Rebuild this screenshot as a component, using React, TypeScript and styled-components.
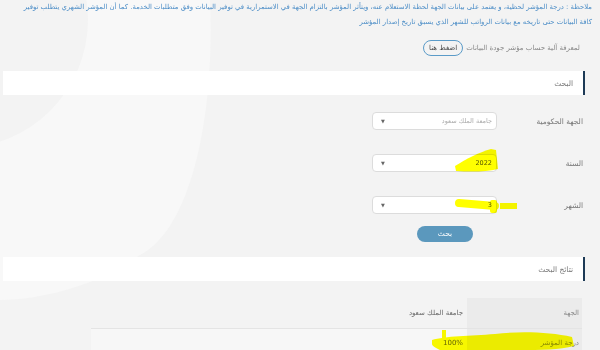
import React from 'react';
import styled, { createGlobalStyle } from 'styled-components';

const GlobalStyle = createGlobalStyle`
  html, body {
    margin: 0;
    padding: 0;
    background: #f3f3f3;
  }
  body {
    font-family: "DejaVu Sans", "Noto Sans", sans-serif;
  }
`;

interface ISelectField {
  label: string;
  value: string;
  isPlaceholder?: boolean;
}

const fields: ISelectField[] = [
  { label: 'الجهة الحكومية', value: 'جامعة الملك سعود', isPlaceholder: true },
  { label: 'السنة', value: '2022' },
  { label: 'الشهر', value: '3' },
];

const results = [
  { label: 'الجهة', value: 'جامعة الملك سعود' },
  { label: 'درجة المؤشر', value: '100%' },
];

const App: React.FC = () => (
  <StyledPage dir="rtl">
    <GlobalStyle />
    <StyledBackdrop viewBox="0 0 600 350" preserveAspectRatio="none" aria-hidden>
      <path d="M0,0 L210,0 C215,120 190,230 140,255 C100,285 40,300 0,300 Z" fill="#f8f8f8" />
      <circle cx="-40" cy="20" r="128" fill="#f3f3f3" />
    </StyledBackdrop>

    <StyledContent>
      <StyledNote>
        ملاحظة : درجة المؤشر لحظية، و يعتمد على بيانات الجهة لحظة الاستعلام عنه، ويتأثر المؤشر بالتزام الجهة في الاستمرارية في توفير البيانات وفق متطلبات الخدمة. كما أن المؤشر الشهري يتطلب توفير
        <br />
        كافة البيانات حتى تاريخه مع بيانات الرواتب للشهر الذي يسبق تاريخ إصدار المؤشر
      </StyledNote>

      <StyledHelpRow>
        <span>لمعرفة آلية حساب مؤشر جودة البيانات</span>
        <StyledOutlineButton type="button">اضغط هنا</StyledOutlineButton>
      </StyledHelpRow>

      <StyledSectionHeader>البحث</StyledSectionHeader>

      <StyledForm>
        {fields.map(field => (
          <StyledFormRow key={field.label}>
            <StyledLabel>{field.label}</StyledLabel>
            <StyledSelect isPlaceholder={!!field.isPlaceholder}>
              <span>{field.value}</span>
              <StyledCaret>▼</StyledCaret>
            </StyledSelect>
          </StyledFormRow>
        ))}
        <StyledSubmit type="button">بحث</StyledSubmit>
      </StyledForm>

      <StyledSectionHeader>نتائج البحث</StyledSectionHeader>

      <StyledTable>
        <tbody>
          {results.map((row, i) => (
            <StyledTableRow key={row.label} isStriped={i % 2 === 1}>
              <StyledHeadCell>{row.label}</StyledHeadCell>
              <StyledCell>{row.value}</StyledCell>
            </StyledTableRow>
          ))}
        </tbody>
      </StyledTable>
    </StyledContent>

    <StyledMarker viewBox="0 0 600 350" aria-hidden>
      <path d="M455,166 C466,159 480,152 491,149 L496,150 L498,169 C486,172 470,172 456,171 Z" fill="#ffff00" />
      <path d="M459,203 L495,206" stroke="#ffff00" strokeWidth="8" strokeLinecap="round" />
      <rect x="490" y="200" width="7" height="13" rx="2" fill="#ffff00" />
      <path d="M500,206 L517,206" stroke="#ffff00" strokeWidth="6" />
      <path d="M432,340 C445,336 470,336 495,334 C520,331 550,332 572,337 L574,346 C560,350 540,350 520,350 L440,350 C436,348 432,346 432,344 Z" fill="#ffff00" />
      <rect x="442" y="330" width="4" height="9" fill="#ffff00" />
    </StyledMarker>
  </StyledPage>
);
export default App;

const StyledPage = styled.div`
  position: relative;
  width: 600px;
  height: 350px;
  overflow: hidden;
  background: #f3f3f3;
`;

const StyledBackdrop = styled.svg`
  position: absolute;
  inset: 0;
  width: 600px;
  height: 350px;
`;

const StyledMarker = styled.svg`
  position: absolute;
  inset: 0;
  width: 600px;
  height: 350px;
  pointer-events: none;
  mix-blend-mode: multiply;
`;

const StyledContent = styled.div`
  position: relative;
  display: flex;
  flex-direction: column;
`;

const StyledNote = styled.p`
  margin: 0;
  padding: 0 8px 0 6px;
  color: #4a8cc6;
  font-size: 6.9px;
  line-height: 15px;
  text-align: right;
  white-space: nowrap;
`;

const StyledHelpRow = styled.div`
  display: flex;
  align-items: center;
  gap: 3px;
  margin-top: 10px;
  padding-right: 20px;
  font-size: 7px;
  color: #888;
`;

const StyledOutlineButton = styled.button`
  height: 16px;
  padding: 0 5px;
  border: 1px solid #5b9bc8;
  border-radius: 8px;
  background: transparent;
  color: #444;
  font-family: inherit;
  font-size: 7px;
  line-height: 1;
`;

const StyledSectionHeader = styled.div`
  display: flex;
  align-items: center;
  height: 24px;
  margin: 15px 15px 0 3px;
  padding-right: 10px;
  background: #fff;
  border-right: 2px solid #1d3a56;
  color: #777;
  font-size: 7.5px;
`;

const StyledForm = styled.div`
  display: flex;
  flex-direction: column;
  gap: 24px;
  padding-top: 17px;
`;

const StyledFormRow = styled.div`
  display: flex;
  align-items: center;
  height: 18px;
  padding-right: 17px;
`;

const StyledLabel = styled.div`
  width: 86px;
  color: #777;
  font-size: 7.5px;
`;

interface IStyledSelectProps {
  isPlaceholder: boolean;
}
const StyledSelect = styled.div<IStyledSelectProps>`
  display: flex;
  align-items: center;
  justify-content: space-between;
  box-sizing: border-box;
  width: 125px;
  height: 18px;
  padding: 0 4px 0 8px;
  background: #fff;
  border: 1px solid #dcdcdc;
  border-radius: 4px;
  color: ${props => (props.isPlaceholder ? '#aaa' : '#555')};
  font-size: 6.5px;
`;

const StyledCaret = styled.span`
  color: #666;
  font-size: 5px;
`;

const StyledSubmit = styled.button`
  align-self: flex-start;
  width: 56px;
  height: 16px;
  margin: -12px 127px 0 0;
  border: none;
  border-radius: 8px;
  background: #5b98bd;
  color: #fff;
  font-family: inherit;
  font-size: 7.5px;
  line-height: 1;
`;

const StyledTable = styled.table`
  width: 491px;
  margin: 17px 18px 0 0;
  border-collapse: collapse;
  font-size: 7px;
`;

interface IStyledTableRowProps {
  isStriped: boolean;
}
const StyledTableRow = styled.tr<IStyledTableRowProps>`
  height: 30px;
  background: ${props => (props.isStriped ? '#f7f7f7' : 'transparent')};
  border-top: ${props => (props.isStriped ? '1px solid #e4e4e4' : 'none')};
`;

const StyledHeadCell = styled.th`
  width: 112px;
  padding: 0 3px 0 0;
  background: #ebebeb;
  color: #888;
  font-weight: normal;
  text-align: right;
`;

const StyledCell = styled.td`
  padding: 0 4px 0 0;
  color: #666;
  text-align: right;
`;
